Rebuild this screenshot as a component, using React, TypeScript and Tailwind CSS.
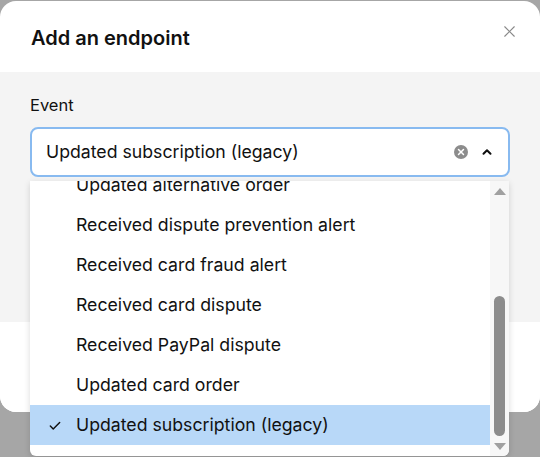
import { X, ChevronUp, Check } from "lucide-react";

const options = [
  "Updated alternative order",
  "Received dispute prevention alert",
  "Received card fraud alert",
  "Received card dispute",
  "Received PayPal dispute",
  "Updated card order",
  "Updated subscription (legacy)",
];

const selected = "Updated subscription (legacy)";

export default function App() {
  return (
    <div className="relative w-[540px] h-[457px] overflow-hidden bg-[#a6a6a6] font-['Inter',sans-serif] text-[#111]">
      {/* Dialog */}
      <div className="mt-px w-[540px] h-[411px] flex flex-col rounded-2xl bg-white overflow-hidden">
        <div className="h-[71px] flex items-start justify-between pl-[31px] pr-[21px]">
          <h2 className="mt-[23px] text-[20px] leading-7 font-semibold">Add an endpoint</h2>
          <button className="mt-[21px] text-[#8a8a8a]">
            <X size={19} strokeWidth={1.4} />
          </button>
        </div>

        <div className="h-[250px] bg-[#f4f4f4] px-[30px] pt-[21px]">
          <label className="block text-[16.5px] leading-6 mb-[10px]">Event</label>
          <div className="h-[50px] flex items-center rounded-lg border-2 border-[#88baf0] bg-white pl-[14px] pr-[14px]">
            <span className="flex-1 text-[17.7px] pt-px">{selected}</span>
            <span className="w-[14px] h-[14px] rounded-full bg-[#8c8c8c] flex items-center justify-center mr-[12px]">
              <X size={10} strokeWidth={3.5} className="text-white" />
            </span>
            <ChevronUp size={14} strokeWidth={3.5} />
          </div>
        </div>

        <div className="flex-1 bg-white" />
      </div>

      {/* Open menu */}
      <div className="absolute left-[30px] top-[181px] w-[479px] h-[275px] flex rounded-b-md bg-white shadow-[0_2px_6px_rgba(0,0,0,0.15)] overflow-hidden">
        <ul className="flex-1 -mt-[16px]">
          {options.map((o) => (
            <li
              key={o}
              className={`h-10 flex items-center text-[17.7px] pt-px ${o === selected ? "bg-[#b8d8f8]" : ""}`}
            >
              <span className="w-[46px] pl-[18px] flex">
                {o === selected && <Check size={14} strokeWidth={2.5} />}
              </span>
              {o}
            </li>
          ))}
        </ul>
        {/* Scrollbar */}
        <div className="w-[19px] bg-[#f7f7f7] flex flex-col items-center">
          <div className="h-[22px] flex items-center justify-center">
            <div className="w-0 h-0 border-l-[6px] border-r-[6px] border-b-[7px] border-l-transparent border-r-transparent border-b-[#a0a0a0]" />
          </div>
          <div className="flex-1 w-full flex flex-col items-center">
            <div className="mt-[94px] w-[11px] h-[140px] rounded-full bg-[#8c8c8c]" />
          </div>
          <div className="h-[20px] flex items-center justify-center">
            <div className="w-0 h-0 border-l-[6px] border-r-[6px] border-t-[7px] border-l-transparent border-r-transparent border-t-[#a0a0a0]" />
          </div>
        </div>
      </div>
    </div>
  );
}
